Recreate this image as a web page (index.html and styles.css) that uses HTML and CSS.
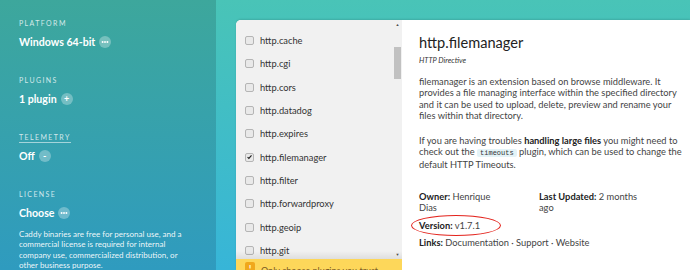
FILE: index.html
```html
<!DOCTYPE html>
<html lang="en">
<head>
  <meta charset="UTF-8" />
  <title>Caddy Download</title>
  <link rel="stylesheet" href="styles.css">
</head>
<body>
  <div class="app">
    <aside class="sidebar">
      <div class="section">
        <div class="label">Platform</div>
        <div class="value">Windows 64-bit <span class="pill"><svg viewBox="0 0 12 12" width="12" height="12"><circle cx="3.6" cy="6" r="0.95" fill="#fff"/><circle cx="6" cy="6" r="0.95" fill="#fff"/><circle cx="8.4" cy="6" r="0.95" fill="#fff"/></svg></span></div>
      </div>
      <div class="section">
        <div class="label">Plugins</div>
        <div class="value">1 plugin <span class="pill">+</span></div>
      </div>
      <div class="section">
        <div class="label underlined">Telemetry</div>
        <div class="value">Off <span class="pill">-</span></div>
      </div>
      <div class="section">
        <div class="label">License</div>
        <div class="value">Choose <span class="pill"><svg viewBox="0 0 12 12" width="12" height="12"><circle cx="3.6" cy="6" r="0.95" fill="#fff"/><circle cx="6" cy="6" r="0.95" fill="#fff"/><circle cx="8.4" cy="6" r="0.95" fill="#fff"/></svg></span></div>
        <p class="license-note">Caddy binaries are free for personal use, and a commercial license is required for internal company use, commercialized distribution, or other business purpose.</p>
      </div>
    </aside>

    <main class="stage">
      <div class="panel">
        <div class="plugin-col">
          <div class="plugin-scroll">
            <ul class="plugin-list">
              <li class="plugin"><span class="check"></span>http.cache</li>
              <li class="plugin"><span class="check"></span>http.cgi</li>
              <li class="plugin"><span class="check"></span>http.cors</li>
              <li class="plugin"><span class="check"></span>http.datadog</li>
              <li class="plugin"><span class="check"></span>http.expires</li>
              <li class="plugin"><span class="check checked"><svg viewBox="0 0 8 8" width="8" height="8"><path d="M1.8 4.2 L3.3 5.7 L6.3 2.2" fill="none" stroke="#222" stroke-width="1.3"/></svg></span>http.filemanager</li>
              <li class="plugin"><span class="check"></span>http.filter</li>
              <li class="plugin"><span class="check"></span>http.forwardproxy</li>
              <li class="plugin"><span class="check"></span>http.geoip</li>
              <li class="plugin"><span class="check"></span>http.git</li>
            </ul>
            <div class="scrollbar">
              <span class="arrow">&#9650;</span>
              <span class="thumb"></span>
              <span class="arrow down">&#9660;</span>
            </div>
          </div>
          <div class="notice"><span class="notice-icon">!</span><span class="notice-text">Only choose plugins you trust</span></div>
        </div>

        <div class="details">
          <h2 class="title">http.filemanager</h2>
          <div class="kind">HTTP Directive</div>
          <p>filemanager is an extension based on browse middleware. It provides a file managing interface within the specified directory and it can be used to upload, delete, preview and rename your files within that directory.</p>
          <p>If you are having troubles <strong>handling large files</strong> you might need to check out the <code>timeouts</code> plugin, which can be used to change the default HTTP Timeouts.</p>
          <div class="meta">
            <div><strong>Owner:</strong> Henrique Dias</div>
            <div><strong>Last Updated:</strong> 2 months ago</div>
          </div>
          <div class="meta-line version"><strong>Version:</strong> v1.7.1</div>
          <div class="meta-line"><strong>Links:</strong> Documentation &middot; Support &middot; Website</div>
        </div>
      </div>
    </main>
  </div>
</body>
</html>
```

FILE: styles.css
```css
body {
  margin: 0;
  font-family: 'Lato', 'Liberation Sans', sans-serif;
  width: 690px;
  height: 270px;
  overflow: hidden;
}

.app {
  display: flex;
  height: 270px;
}

/* sidebar */

.sidebar {
  width: 216px;
  flex: none;
  box-sizing: border-box;
  padding: 18px 19px 0;
  background: linear-gradient(#3da79c, #2f9bbf);
  color: #fff;
}

.section {
  margin-bottom: 26px;
}

.label {
  font-size: 7px;
  line-height: 10px;
  letter-spacing: 1.4px;
  text-transform: uppercase;
  color: rgba(255, 255, 255, 0.78);
  margin-bottom: 7px;
  width: fit-content;
}

.label.underlined {
  box-shadow: 0 1px 0 rgba(255, 255, 255, 0.55);
}

.value {
  font-size: 10.6px;
  font-weight: 700;
  line-height: 14px;
  display: flex;
  align-items: center;
  gap: 4px;
}

.pill {
  width: 12px;
  height: 12px;
  border-radius: 50%;
  background-color: rgba(255, 255, 255, 0.3);
  font-size: 9px;
  line-height: 12px;
  text-align: center;
}

.pill svg {
  display: block;
}

.license-note {
  margin: 9px 0 0;
  font-size: 8.05px;
  line-height: 10.4px;
  color: rgba(255, 255, 255, 0.92);
}

/* stage */

.stage {
  flex: 1;
  padding: 20px 0 0 20px;
  background: linear-gradient(#49c4b7, #37b5d8);
}

.panel {
  display: flex;
  height: 250px;
  border-top-left-radius: 5px;
  overflow: hidden;
  background-color: white;
  box-shadow: 0 -1px 2px rgba(0, 0, 0, 0.12);
}

.plugin-col {
  width: 166px;
  flex: none;
  display: flex;
  flex-direction: column;
  background-color: #f1f1f1;
}

.plugin-scroll {
  flex: 1;
  display: flex;
  position: relative;
  min-height: 0;
}

.plugin-scroll::after {
  content: '';
  position: absolute;
  left: 0;
  right: 0;
  bottom: 0;
  height: 8px;
  background: linear-gradient(rgba(0, 0, 0, 0), rgba(0, 0, 0, 0.08));
}

.plugin-list {
  list-style: none;
  margin: 0;
  padding: 9px 0 0 9px;
  flex: 1;
}

.plugin {
  display: flex;
  align-items: center;
  height: 23.33px;
  font-size: 9.3px;
  color: #333;
}

.check {
  width: 7px;
  height: 7px;
  border: 1px solid #b5b5b5;
  border-radius: 2px;
  background-color: #e9e9e9;
  margin-right: 6px;
  display: flex;
  align-items: center;
  justify-content: center;
}

.check svg {
  display: block;
}

.scrollbar {
  width: 9px;
  display: flex;
  flex-direction: column;
  align-items: center;
  background-color: #f1f1f1;
}

.arrow {
  font-size: 4px;
  line-height: 9px;
  color: #505050;
}

.arrow.down {
  margin-top: auto;
}

.thumb {
  width: 7px;
  height: 32px;
  margin-top: 18px;
  background-color: #c1c1c1;
}

.notice {
  height: 9px;
  flex: none;
  display: flex;
  align-items: flex-start;
  gap: 6px;
  padding: 2px 0 0 9px;
  background-color: #fdd75a;
  color: #7b5a24;
  font-size: 9px;
  line-height: 14px;
  overflow: hidden;
}

.notice-icon {
  width: 10px;
  height: 12px;
  margin-top: 1px;
  border-radius: 2px;
  background-color: #f0a81c;
  color: #fff;
  font-size: 8px;
  font-weight: 700;
  line-height: 12px;
  text-align: center;
}

.notice-text {
  margin-top: 3px;
}

/* plugin details */

.details {
  flex: 1;
  padding: 14px 7px 0 17px;
  color: #444;
  font-size: 9.3px;
  line-height: 11.4px;
}

.title {
  margin: 0;
  font-size: 14.6px;
  font-weight: 400;
  line-height: 18px;
  color: #222;
}

.kind {
  margin-top: 4px;
  font-size: 7.5px;
  line-height: 10px;
  font-style: italic;
  color: #333;
}

.details p {
  margin: 10px 0 0;
}

.details p + p {
  margin-top: 13px;
}

.details strong {
  color: #222;
}

code {
  font-family: 'Liberation Mono', monospace;
  font-size: 7px;
  padding: 0 3px;
  border-radius: 2px;
  background-color: #e4f3f7;
  color: #333;
}

.meta {
  display: grid;
  grid-template-columns: 88px 100px;
  column-gap: 32px;
  margin-top: 20px;
}

.meta-line {
  margin-top: 6px;
}

.version {
  position: relative;
  width: fit-content;
}

.version::after {
  content: '';
  position: absolute;
  left: -8px;
  top: -5px;
  width: 88px;
  height: 19px;
  border: 1.5px solid #e3231c;
  border-radius: 50%;
}
```
